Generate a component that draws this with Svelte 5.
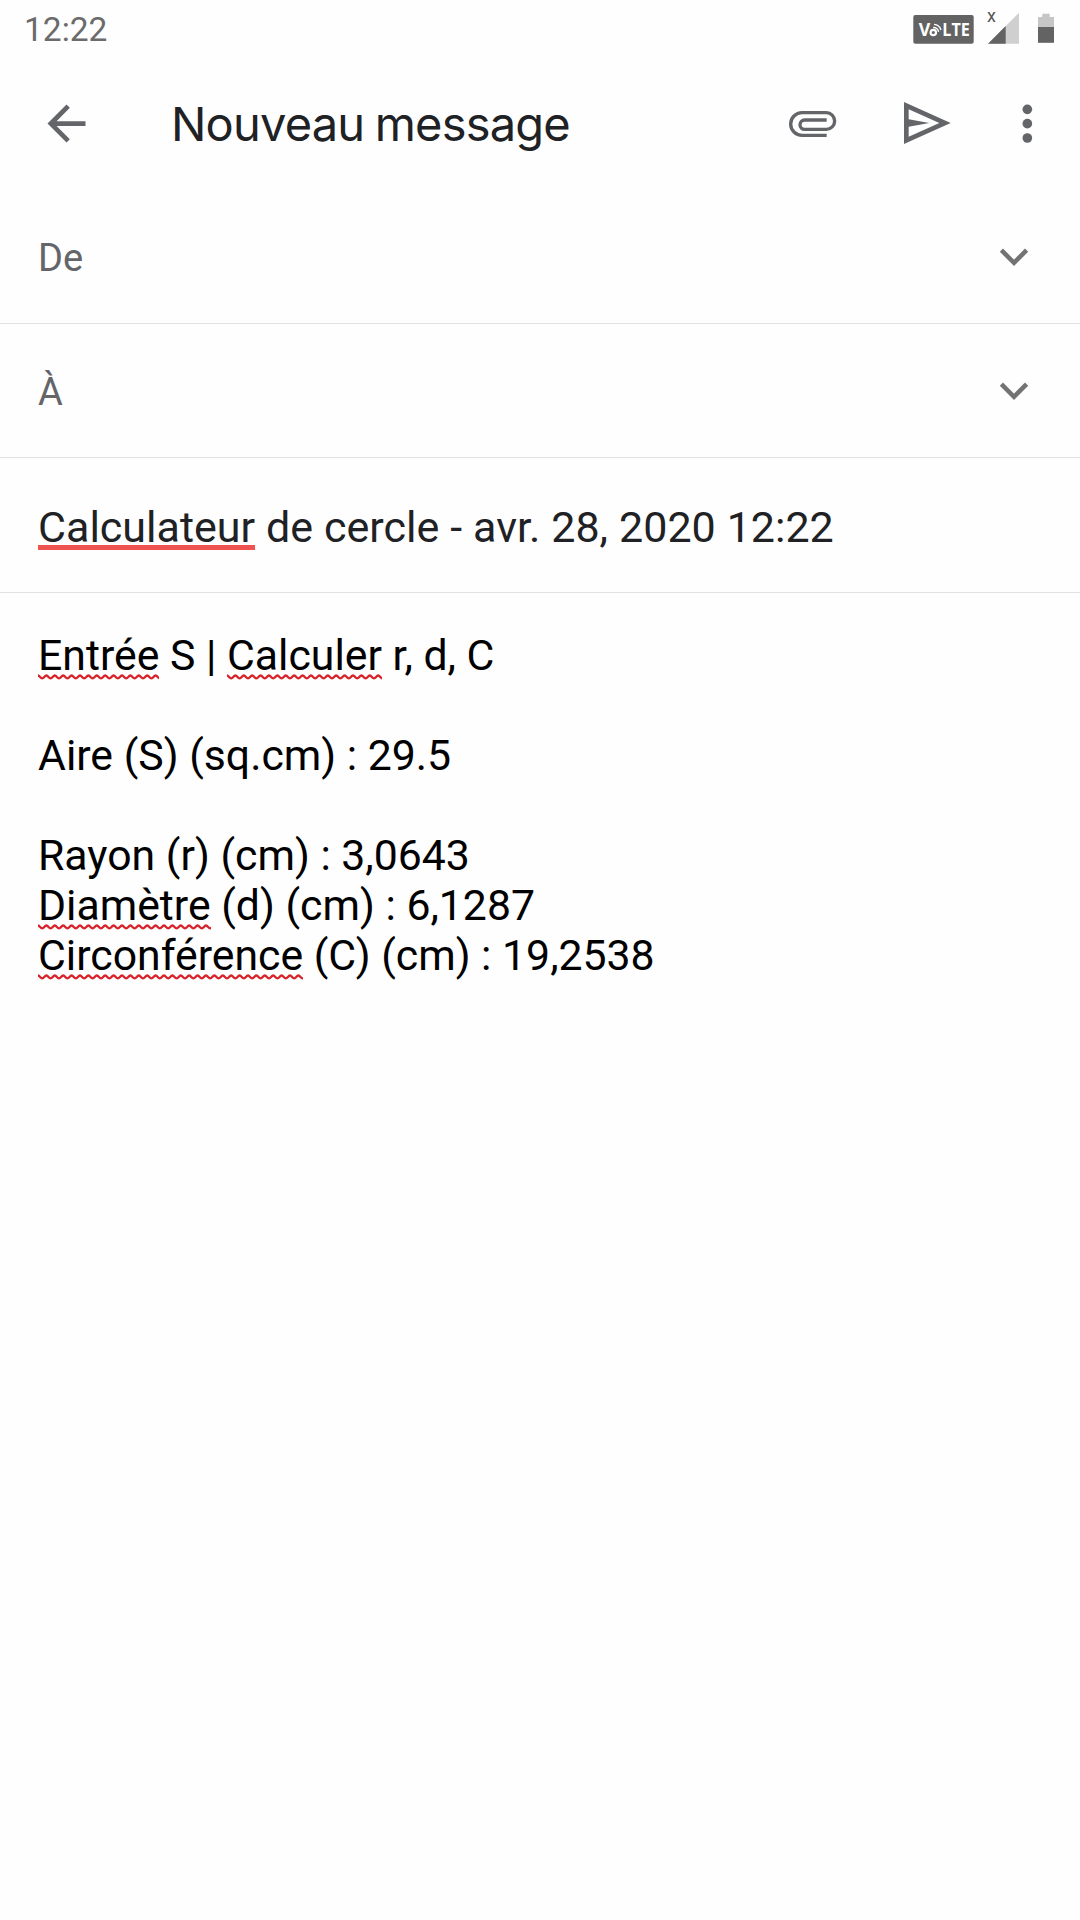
<script>
  const time = '12:22';
  const fields = ['De', 'À'];
  const subject = [
    { text: 'Calculateur', flagged: true },
    { text: ' de cercle - avr. 28, 2020 12:22' }
  ];

  // each line is a list of runs, flagged runs get the spellcheck wave
  const lines = [
    [{ text: 'Entrée', flagged: true }, { text: ' S | ' }, { text: 'Calculer', flagged: true }, { text: ' r, d, C' }],
    [],
    [{ text: 'Aire (S) (sq.cm) : 29.5' }],
    [],
    [{ text: 'Rayon (r) (cm) : 3,0643' }],
    [{ text: 'Diamètre', flagged: true }, { text: ' (d) (cm) : 6,1287' }],
    [{ text: 'Circonférence', flagged: true }, { text: ' (C) (cm) : 19,2538' }]
  ];

  const wave = 'M0 1.5' + 'c1.8 0 2.4 2.8 4.2 2.8s2.4 -2.8 4.2 -2.8'.repeat(40);
</script>

<div class="screen">
  <div class="status">
    <span class="time">{time}</span>
    <svg class="system" width="160" height="50" viewBox="0 0 160 50">
      <rect x="5.3" y="15" width="60.4" height="28.7" rx="2" fill="#636363" />
      <g fill="#fff" font-family="Open Sans, sans-serif" font-weight="700" font-size="17">
        <text x="10.8" y="36" textLength="11.5" lengthAdjust="spacingAndGlyphs">V</text>
        <text x="34.3" y="36" textLength="27.5" lengthAdjust="spacingAndGlyphs">LTE</text>
      </g>
      <g fill="none" stroke="#fff" stroke-width="1.5">
        <circle cx="25.3" cy="32.5" r="2.7" stroke-width="2.2" />
        <path d="M25.2 27.4a5.2 5.2 0 0 1 5.4 4.4" />
        <path d="M26 24.4a8 8 0 0 1 7 5.6" stroke-width="1.4" />
      </g>
      <text x="79" y="22" font-family="Roboto, sans-serif" font-size="18" fill="#555">x</text>
      <path d="M80 43.7L111 12.7V43.7Z" fill="#cfcfcf" />
      <path d="M80 43.7L97.7 26V43.7Z" fill="#636363" />
      <path d="M130 27V17H134.3V13.7H141.7V17H146V27Z" fill="#c6c6c6" />
      <path d="M130 27H146V42.8H130Z" fill="#636363" />
    </svg>
  </div>

  <header>
    <button class="back" aria-label="Retour">
      <svg width="57" height="57" viewBox="0 0 24 24">
        <path d="M20 11H7.83l5.59-5.59L12 4l-8 8 8 8 1.41-1.41L7.83 13H20v-2z" fill="#636569" />
      </svg>
    </button>
    <h1>Nouveau message</h1>
    <svg class="actions" width="260" height="60" viewBox="0 0 780 180">
      <path
        d="M140 124H66a34 34 0 0 1 0-68H139a25 25 0 0 1 0 50H74a14 14 0 0 1 0-28H140"
        fill="none"
        stroke="#636569"
        stroke-width="10"
      />
      <path
        d="M372 24L512 87L372 150ZM386 46V76L448 87L386 98V128L478 87Z"
        fill="#636569"
        fill-rule="evenodd"
      />
      <g fill="#636569">
        <circle cx="742" cy="46" r="14.5" />
        <circle cx="742" cy="89" r="14.5" />
        <circle cx="742" cy="132" r="14.5" />
      </g>
    </svg>
  </header>

  {#each fields as field}
    <div class="row field">
      <span>{field}</span>
      <svg width="30" height="20" viewBox="0 0 30 20">
        <path d="M2.4 3.2L15 15.8L27.6 3.2" fill="none" stroke="#737373" stroke-width="4.5" />
      </svg>
    </div>
  {/each}

  <div class="row subject">
    <span>{#each subject as run}<span class:underlined={run.flagged}>{run.text}</span>{/each}</span>
  </div>

  <div class="message">
    {#each lines as line}
      <p>{#each line as run}{#if run.flagged}<span class="typo">{run.text}<svg height="6"><path d={wave} /></svg></span>{:else}{run.text}{/if}{/each}</p>
    {/each}
  </div>
</div>

<style>
  :global(body) {
    background: #fefefe;
  }

  .screen {
    height: 1920px;
    box-sizing: border-box;
    background: #fefefe;
    font-family: Roboto, sans-serif;
    overflow: hidden;
  }

  .status {
    display: flex;
    justify-content: space-between;
    height: 58px;
    padding: 0 12px 0 24px;
  }

  .time {
    font-size: 33.5px;
    line-height: 59px;
    color: #6b6b6b;
  }

  header {
    display: flex;
    align-items: center;
    height: 131px;
    padding-left: 38px;
    padding-right: 40px;
  }

  .back {
    display: flex;
    padding: 0;
    border: none;
    background: none;
  }

  h1 {
    flex: 1;
    margin: 0 0 0 76px;
    font-family: Inter, sans-serif;
    font-size: 47px;
    font-weight: 400;
    line-height: 60px;
    letter-spacing: -0.8px;
    word-spacing: -2px;
    color: #202124;
    white-space: nowrap;
  }

  .row {
    display: flex;
    align-items: center;
    justify-content: space-between;
    box-sizing: border-box;
    height: 134.5px;
    padding: 4px 51.5px 0 38px;
    border-bottom: 1px solid #e2e2e2;
  }

  .field {
    font-size: 38px;
    color: #636569;
  }

  .field svg {
    margin-bottom: 2px;
  }

  .subject {
    font-size: 43px;
    word-spacing: 0.3px;
    color: #202124;
    white-space: pre;
  }

  .underlined {
    text-decoration: underline 5px #ee5350;
    text-decoration-skip-ink: none;
    text-underline-offset: 3px;
  }

  .message {
    padding: 37px 38px 0;
    font-size: 42.75px;
    line-height: 50px;
    color: #000;
    white-space: pre;
  }

  .message p {
    height: 50px;
    margin: 0;
  }

  .typo {
    position: relative;
  }

  /* wave runs under the descender line of the word */
  .typo svg {
    position: absolute;
    left: 0;
    bottom: 0;
    width: 100%;
  }

  .typo path {
    fill: none;
    stroke: #d8232a;
    stroke-width: 2.3;
  }
</style>
